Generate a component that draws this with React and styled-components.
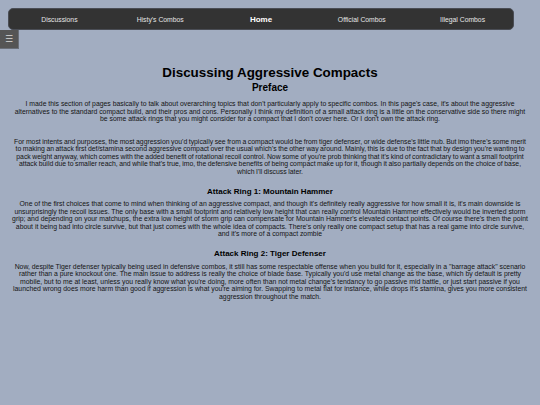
import React from "react";
import styled, { createGlobalStyle } from "styled-components";

const Global = createGlobalStyle`
  html, body { margin: 0; padding: 0; background: #a2adc1; }
  body { font-family: "Liberation Sans", Arial, sans-serif; color: #141414; }
`;

const Page = styled.div`
  min-height: 405px;
  background: #a2adc1;
`;

const Nav = styled.nav`
  box-sizing: border-box;
  margin: 8px 0 0 8px;
  width: 506px;
  height: 22px;
  background: #333333;
  border: 1px solid #4a4d55;
  border-radius: 5px;
  display: flex;
  align-items: center;
`;

const NavItem = styled.a`
  flex: 1;
  text-align: center;
  color: ${(p) => (p.$active ? "#ffffff" : "#e6e6e6")};
  font-size: ${(p) => (p.$active ? "8px" : "6.8px")};
  font-weight: ${(p) => (p.$active ? "bold" : "normal")};
  text-decoration: none;
`;

const MenuButton = styled.button`
  box-sizing: border-box;
  display: block;
  width: 19px;
  height: 19px;
  margin: 0;
  padding: 0;
  border: 1px solid #6a6f78;
  border-left: none;
  border-top: none;
  background: #555555;
  color: #d8d8d8;
  font-size: 9px;
  line-height: 17px;
  font-family: "DejaVu Sans", sans-serif;
`;

const Content = styled.main`
  padding: 0 12px;
  text-align: center;
`;

const Title = styled.h1`
  margin: 16px 0 0;
  font-size: 13.4px;
  line-height: 15px;
  color: #000;
`;

const Subtitle = styled.h2`
  margin: 1.5px 0 7.5px;
  font-size: 10px;
  line-height: 11px;
  color: #000;
`;

const Para = styled.p`
  margin: 0 0 ${(p) => p.$gap || 0}px;
  font-size: 6.85px;
  line-height: 7.5px;
  word-spacing: ${(p) => p.$wordSpacing || 0}px;
`;

const Section = styled.h3`
  margin: 11.5px 0 4.5px;
  font-size: 8px;
  line-height: 9px;
  color: #000;
`;

export default function App() {
  return (
    <Page>
      <Global />
      <Nav>
        <NavItem>Discussions</NavItem>
        <NavItem>Histy's Combos</NavItem>
        <NavItem $active>Home</NavItem>
        <NavItem>Official Combos</NavItem>
        <NavItem>Illegal Combos</NavItem>
      </Nav>
      <MenuButton>☰</MenuButton>
      <Content>
        <Title>Discussing Aggressive Compacts</Title>
        <Subtitle>Preface</Subtitle>
        <Para $gap={15}>
          I made this section of pages basically to talk about overarching topics that don't particularly apply to specific combos. In this page's case, it's about the aggressive alternatives to the standard compact build, and their pros and cons. Personally I think my definition of a small attack ring is a little on the conservative side so there might be some attack rings that you might consider for a compact that I don't cover here. Or I don't own the attack ring.
        </Para>
        <Para $wordSpacing={-0.35}>
          For most intents and purposes, the most aggression you'd typically see from a compact would be from tiger defenser, or wide defense's little nub. But imo there's some merit to making an attack first def/stamina second aggressive compact over the usual which's the other way around. Mainly, this is due to the fact that by design you're wanting to pack weight anyway, which comes with the added benefit of rotational recoil control. Now some of you're prob thinking that it's kind of contradictary to want a small footprint attack build due to smaller reach, and while that's true, imo, the defensive benefits of being compact make up for it, though it also partially depends on the choice of base, which I'll discuss later.
        </Para>
        <Section>Attack Ring 1: Mountain Hammer</Section>
        <Para>
          One of the first choices that come to mind when thinking of an aggressive compact, and though it's definitely really aggressive for how small it is, it's main downside is unsurprisingly the recoil issues. The only base with a small footprint and relatively low height that can really control Mountain Hammer effectively would be inverted storm grip; and depending on your matchups, the extra low height of storm grip can compensate for Mountain Hammer's elevated contact points. Of course there's then the point about it being bad into circle survive, but that just comes with the whole idea of compacts. There's only really one compact setup that has a real game into circle survive, and it's more of a compact zombie
        </Para>
        <Section>Attack Ring 2: Tiger Defenser</Section>
        <Para>
          Now, despite Tiger defenser typically being used in defensive combos, it still has some respectable offense when you build for it, especially in a "barrage attack" scenario rather than a pure knockout one. The main issue to address is really the choice of blade base. Typically you'd use metal change as the base, which by default is pretty mobile, but to me at least, unless you really know what you're doing, more often than not metal change's tendancy to go passive mid battle, or just start passive if you launched wrong does more harm than good if aggression is what you're aiming for. Swapping to metal flat for instance, while drops it's stamina, gives you more consistent aggression throughout the match.
        </Para>
      </Content>
    </Page>
  );
}
